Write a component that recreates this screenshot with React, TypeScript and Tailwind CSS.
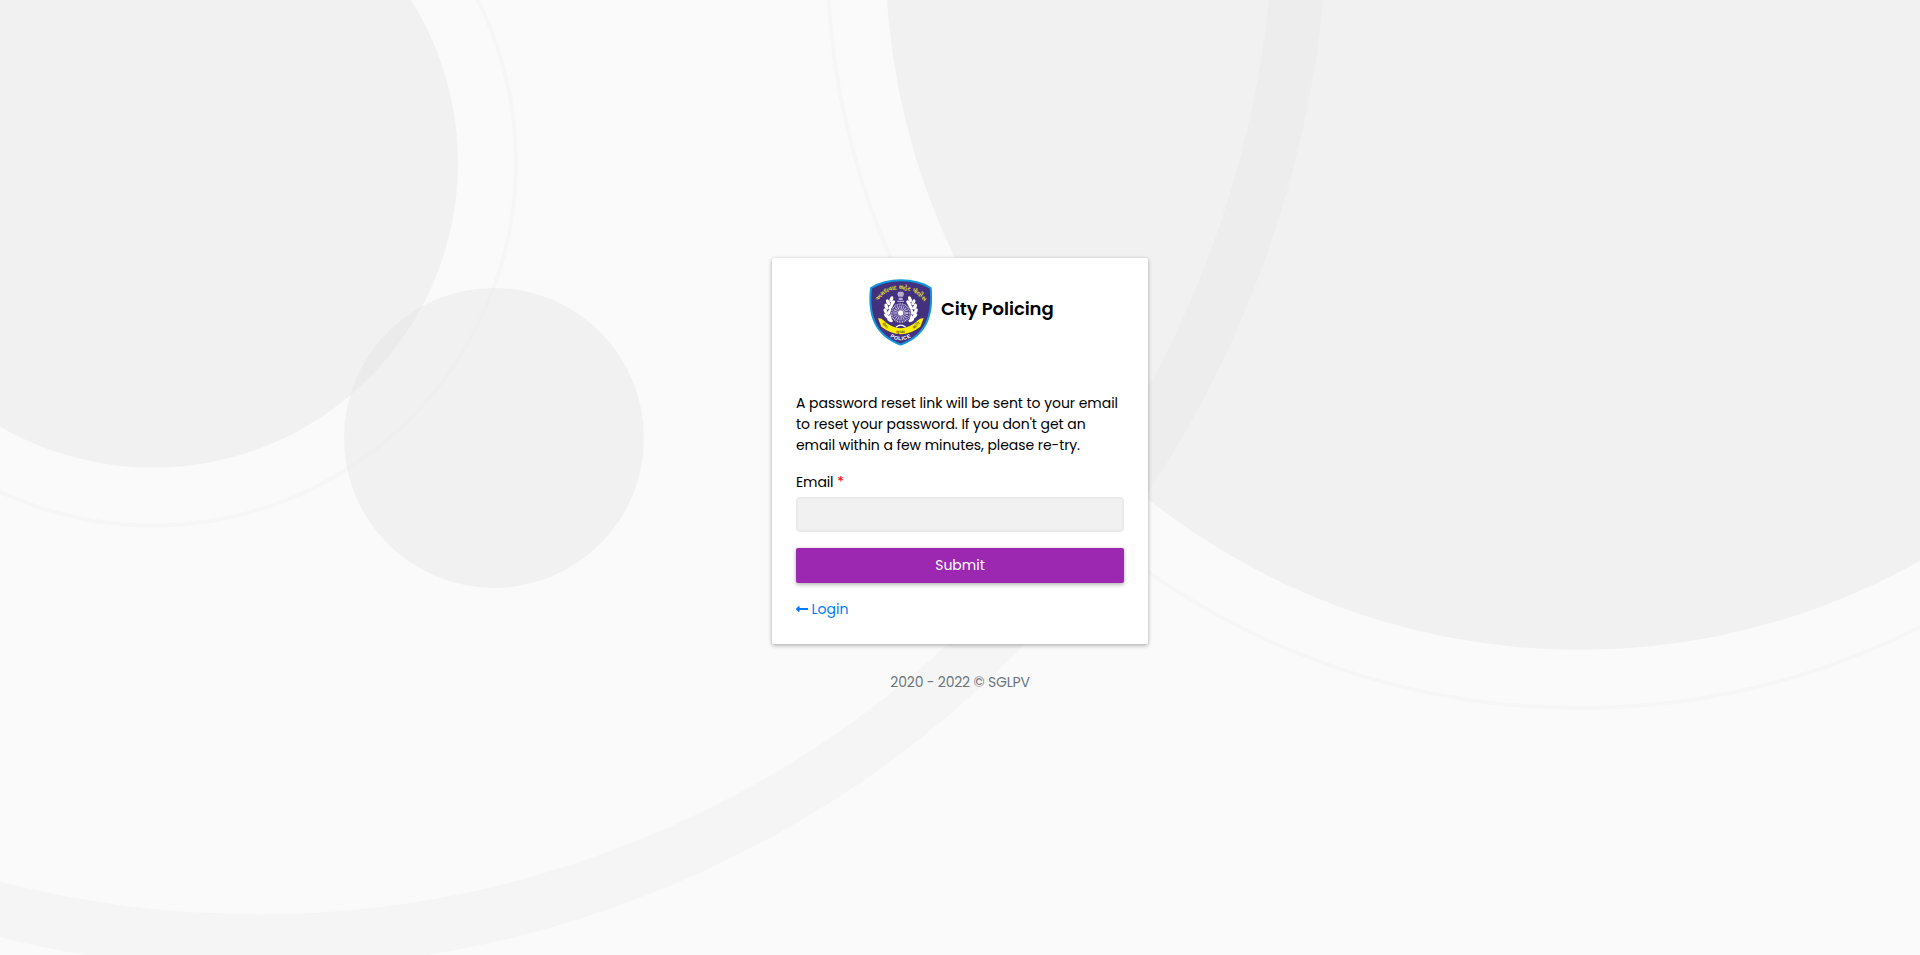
import React from "react";
import { FaLongArrowAltLeft } from "react-icons/fa";

const leaves = [
  [66, 61, 20], [56, 70, -25], [70, 72, 35], [51, 83, -20], [64, 84, 35],
  [49, 97, -25], [60, 99, 30], [52, 111, -45], [64, 113, 15], [62, 123, -60],
];

function Backdrop() {
  return (
    <svg className="absolute inset-0 -z-10 h-full w-full" viewBox="0 0 1920 955" preserveAspectRatio="xMidYMid slice" fill="none">
      <circle cx="153" cy="162.7" r="305" fill="#e0e0e0" fillOpacity="0.32" />
      <circle cx="153" cy="162.5" r="363" stroke="#e0e0e0" strokeOpacity="0.14" strokeWidth="4" />
      <circle cx="494" cy="437.9" r="150" fill="#e0e0e0" fillOpacity="0.32" />
      <circle cx="1580" cy="-44.6" r="694.4" fill="#e0e0e0" fillOpacity="0.32" />
      <circle cx="1580" cy="-44.6" r="752.7" stroke="#e0e0e0" strokeOpacity="0.14" strokeWidth="4" />
      <circle cx="257" cy="-102.5" r="1044" stroke="#e0e0e0" strokeOpacity="0.19" strokeWidth="54" />
    </svg>
  );
}

function Badge() {
  return (
    <svg className="mt-px h-[67px] w-[63px] shrink-0" viewBox="-1 0 189 201">
      <defs>
        <path id="arc-top" d="M26 66 Q50 31 94 30 Q138 31 170 72" />
        <path id="arc-police" d="M62 174 Q94 194 130 172" />
      </defs>
      <path d="M94 4 C124 4 158 11 184 27 C190 92 182 164 94 197 C6 164 -2 92 5 27 C32 11 64 4 94 4Z" fill="#43307f" stroke="#1296db" strokeWidth="6" />
      <text fontSize="17" fontWeight="700" fill="#e9e02a" className="font-['Noto_Sans',sans-serif]">
        <textPath href="#arc-top" textLength="164" lengthAdjust="spacingAndGlyphs">અમદાવાદ શહેર પોલીસ</textPath>
      </text>
      <g fill="#fff">
        {leaves.map(([x, y, a]) => (
          <g key={`${x}-${y}`}>
            <ellipse cx={x} cy={y} rx="5" ry="9.5" transform={`rotate(${a} ${x} ${y})`} />
            <ellipse cx={188 - x} cy={y} rx="5" ry="9.5" transform={`rotate(${-a} ${188 - x} ${y})`} />
          </g>
        ))}
      </g>
      <circle cx="94" cy="102" r="31" fill="#43307f" />
      <circle cx="94" cy="102" r="27" fill="none" stroke="#c6bfdd" strokeWidth="5" strokeDasharray="3 2" />
      <circle cx="94" cy="102" r="16" fill="none" stroke="#c6bfdd" strokeWidth="14" strokeDasharray="2.6 2.4" />
      <circle cx="94" cy="102" r="8" fill="#fff" />
      <path d="M87 38 h14 l3 7 -3 8 h-14 l-3 -8z M88 56h12v7H88z M84 65h20v4H84z" fill="#b7aed2" />
      <path d="M80 145 Q94 132 109 145" stroke="#fff" strokeWidth="4" fill="none" />
      <path d="M26 118 Q37 117 42 124 Q94 172 146 124 Q152 117 163 118 L153 143 Q94 188 36 143Z" fill="#fdf000" />
      <g fontSize="12" fontWeight="700" fill="#65581d" className="font-['Noto_Sans',sans-serif]">
        <text x="38" y="136" transform="rotate(40 38 136)">સેવા</text>
        <text x="79" y="162">સુરક્ષા</text>
        <text x="134" y="149" transform="rotate(-40 134 149)">શાંતિ</text>
      </g>
      <text fontSize="16" fontWeight="700" fill="#fff" className="font-['Liberation_Sans',sans-serif]">
        <textPath href="#arc-police" textLength="66">POLICE</textPath>
      </text>
    </svg>
  );
}

export default function App() {
  return (
    <main className="relative isolate flex h-screen flex-col items-center overflow-hidden bg-[#fafafa] pt-[258px] font-[Poppins,Inter,sans-serif] text-[14px] leading-[21px] text-black">
      <Backdrop />
      <section className="h-[386px] w-[376px] shrink-0 rounded-[2px] bg-white px-6 pt-5 shadow-[0_2px_4px_rgba(0,0,0,0.24),0_0_4px_rgba(0,0,0,0.1)]">
        <header className="flex h-[115px] items-start pl-[73px]">
          <Badge />
          <h1 className="mt-[17px] ml-[9px] text-[18px] leading-[27px] font-semibold tracking-[-0.06px] whitespace-nowrap">City Policing</h1>
        </header>
        <p className="whitespace-nowrap">
          <span className="block tracking-[-0.05px]">A password reset link will be sent to your email</span>
          <span className="block tracking-[-0.05px]">to reset your password. If you don't get an</span>
          <span className="block tracking-[-0.07px]">email within a few minutes, please re-try.</span>
        </p>
        <form className="mt-4" onSubmit={(e) => e.preventDefault()}>
          <label htmlFor="email" className="block">
            <span className="tracking-[-0.1px]">Email</span> <span className="text-[#ff0000]">*</span>
          </label>
          <input id="email" type="email" className="mt-[4px] block h-[35px] w-full rounded-[4px] border-2 border-[#eaeaea] bg-[#f1f1f1] px-3 outline-none" />
          <button className="mt-4 block h-[35px] w-full rounded-[2px] bg-[#9c27b0] text-white shadow-[0_2px_4px_rgba(0,0,0,0.25),0_0_3px_rgba(0,0,0,0.12)]">Submit</button>
        </form>
        <a href="#" className="mt-4 flex items-center text-[#007bff]">
          <FaLongArrowAltLeft className="mr-[3.5px] mb-[2px] h-[14px] w-[12px]" />
          <span>Login</span>
        </a>
      </section>
      <footer className="mt-[28px] tracking-[-0.2px] text-[#6c757d]">2020 - 2022 © SGLPV</footer>
    </main>
  );
}
